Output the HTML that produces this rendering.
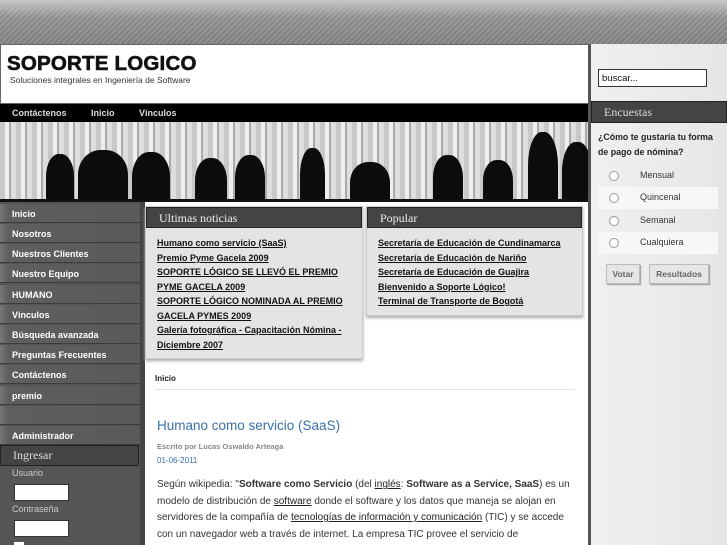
<!DOCTYPE html>
<html><head><meta charset="utf-8"><style>
*{margin:0;padding:0;box-sizing:border-box}
html,body{width:727px;height:545px;overflow:hidden}
body{position:relative;font-family:"Liberation Sans",sans-serif;background:#555}
.top{position:absolute;left:0;top:0;width:727px;height:44px;background:repeating-linear-gradient(135deg,#8a8a8a 0 2px,#9e9e9e 2px 4px);}
.top:after{content:"";position:absolute;inset:0;background:linear-gradient(#c8c8c8 0,rgba(200,200,200,0) 40%,rgba(0,0,0,0.1))}
.hdr{position:absolute;left:0;top:44px;width:589px;height:60px;background:#fff;border:1px solid #666;border-right:none}
.hdr h1{position:absolute;left:6px;top:7px;font-size:20.5px;font-weight:bold;color:#111;letter-spacing:0.2px;-webkit-text-stroke:0.6px #111}
.hdr p{position:absolute;left:9px;top:30px;font-size:8.5px;color:#333}
.nav{position:absolute;left:0;top:104px;width:589px;height:18px;background:#000;color:#ddd;font-size:9px;font-weight:bold}
.nav span{position:absolute;top:4px}
.ban{position:absolute;left:0;top:122px;width:589px;height:80px;background:repeating-linear-gradient(90deg,#c8c8c8 0 5px,#eee 5px 9px,#aaa 9px 11px,#ddd 11px 16px);overflow:hidden;border-bottom:3px solid #111}
.ban i{position:absolute;background:#0c0c0c;border-radius:45% 45% 10% 10%}
.left{position:absolute;left:0;top:202px;width:140px;height:343px;background:#555}
.mi{position:absolute;left:0;width:140px;height:19px;background:linear-gradient(90deg,#777,#5e5e5e 8px,#5a5a5a);color:#fff;font-size:9px;font-weight:bold;padding:5px 0 0 12px;border-bottom:1px solid #3c3c3c}
.lbl{position:absolute;left:12px;font-size:9px;color:#ccc}
.inp{position:absolute;left:14px;width:55px;height:17px;background:#fff;border:1px solid #333}
.main{position:absolute;left:140px;top:202px;width:449px;height:343px;background:#fff;border-left:5px solid #444}
.box{position:absolute;background:#e4e4e4;border:1px solid #ccc;box-shadow:0 2px 3px #aaa}
.bh{height:21px;background:#444;color:#eee;font-family:"Liberation Serif",serif;font-size:12px;padding:3px 0 0 12px;border:1px solid #222}
.box a{display:block;color:#111;font-size:9px;font-weight:bold;text-decoration:underline;line-height:14.5px;margin-left:11px;white-space:nowrap}
.right{position:absolute;left:588px;top:44px;width:139px;height:501px;background:linear-gradient(90deg,#f0f0f0,#e6e6e6);border-left:3px solid #555}
.opt{position:absolute;left:7px;width:120px;height:22px;font-size:9px;color:#333}
.opt b{position:absolute;left:11px;top:6px;width:10px;height:10px;border:1px solid #999;border-radius:50%;background:#fff}
.opt span{position:absolute;left:42px;top:5px}
.btn{position:absolute;top:220px;height:20px;background:#e6e6e6;border:1px solid #bbb;box-shadow:1px 1px 1px #999;font-size:8.5px;font-weight:bold;color:#666;text-align:center;padding-top:4px}
.txt{position:absolute;left:157px;top:477px;width:425px;font-size:10px;color:#333;line-height:16.5px}
.txt u{color:#222}
</style></head><body>
<div class="top"></div>
<div class="hdr"><h1>SOPORTE LOGICO</h1><p>Soluciones integrales en Ingeniería de Software</p></div>
<div class="nav"><span style="left:12px">Contáctenos</span><span style="left:91px">Inicio</span><span style="left:139px">Vínculos</span></div>
<div class="ban">
<i style="left:46px;top:32px;width:28px;height:50px"></i>
<i style="left:78px;top:28px;width:50px;height:55px"></i>
<i style="left:132px;top:30px;width:38px;height:55px"></i>
<i style="left:195px;top:36px;width:32px;height:50px"></i>
<i style="left:235px;top:33px;width:30px;height:50px"></i>
<i style="left:300px;top:26px;width:25px;height:60px"></i>
<i style="left:350px;top:40px;width:40px;height:45px"></i>
<i style="left:433px;top:33px;width:30px;height:50px"></i>
<i style="left:483px;top:38px;width:30px;height:45px"></i>
<i style="left:528px;top:10px;width:30px;height:75px"></i>
<i style="left:562px;top:20px;width:30px;height:65px"></i>
</div>
<div class="left">
<div class="mi" style="top:2px">Inicio</div>
<div class="mi" style="top:22px">Nosotros</div>
<div class="mi" style="top:42px">Nuestros Clientes</div>
<div class="mi" style="top:62px">Nuestro Equipo</div>
<div class="mi" style="top:83px">HUMANO</div>
<div class="mi" style="top:103px">Vínculos</div>
<div class="mi" style="top:123px">Búsqueda avanzada</div>
<div class="mi" style="top:143px">Preguntas Frecuentes</div>
<div class="mi" style="top:163px">Contáctenos</div>
<div class="mi" style="top:184px">premio</div>
<div class="mi" style="top:204px"></div>
<div class="mi" style="top:224px">Administrador</div>
<div style="position:absolute;left:0;top:243px;width:139px;height:21px;background:#444;border:1px solid #222;color:#ddd;font-family:'Liberation Serif',serif;font-size:12px;padding:2px 0 0 12px">Ingresar</div>
<div class="lbl" style="top:266px">Usuario</div>
<div class="inp" style="top:282px"></div>
<div class="lbl" style="top:302px">Contraseña</div>
<div class="inp" style="top:318px"></div>
<div style="position:absolute;left:14px;top:340px;width:10px;height:10px;background:#fff"></div>
</div>
<div class="main"></div>
<div class="box" style="left:145px;top:206px;width:218px;height:153px"><div class="bh">Ultimas noticias</div><div style="padding-top:8px">
<a>Humano como servicio (SaaS)</a><a>Premio Pyme Gacela 2009</a><a>SOPORTE LÓGICO SE LLEVÓ EL PREMIO</a><a>PYME GACELA 2009</a><a>SOPORTE LÓGICO NOMINADA AL PREMIO</a><a>GACELA PYMES 2009</a><a>Galería fotográfica - Capacitación Nómina -</a><a>Diciembre 2007</a></div></div>
<div class="box" style="left:366px;top:206px;width:217px;height:110px"><div class="bh">Popular</div><div style="padding-top:8px">
<a>Secretaría de Educación de Cundinamarca</a><a>Secretaría de Educación de Nariño</a><a>Secretaría de Educación de Guajira</a><a>Bienvenido a Soporte Lógico!</a><a>Terminal de Transporte de Bogotá</a></div></div>
<div style="position:absolute;left:155px;top:374px;font-size:8px;font-weight:bold;color:#222">Inicio</div>
<div style="position:absolute;left:155px;top:389px;width:420px;border-top:1px solid #e4e4e4"></div>
<div style="position:absolute;left:157px;top:418px;font-size:13.5px;color:#3a6fa8">Humano como servicio (SaaS)</div>
<div style="position:absolute;left:157px;top:442px;font-size:7.5px;font-weight:bold;color:#888">Escrito por Lucas Oswaldo Arteaga</div>
<div style="position:absolute;left:157px;top:456px;font-size:8px;color:#3a6fa8">01-06-2011</div>
<div class="txt">Según wikipedia: "<b>Software como Servicio</b> (del <u>inglés</u>: <b>Software as a Service, SaaS</b>) es un modelo de distribución de <u>software</u> donde el software y los datos que maneja se alojan en servidores de la compañía de <u>tecnologías de información y comunicación</u> (TIC) y se accede con un navegador web a través de internet. La empresa TIC provee el servicio de mantenimiento, operación diaria, y soporte del software usado por el cliente. Regularmente el</div>
<div class="right">
<div style="position:absolute;left:7px;top:25px;width:109px;height:18px;background:#fff;border:1px solid #333;font-size:9.5px;padding:3px 0 0 3px;color:#111">buscar...</div>
<div style="position:absolute;left:0;top:57px;width:136px;height:22px;background:#444;border:1px solid #222;color:#ddd;font-family:'Liberation Serif',serif;font-size:12px;padding:3px 0 0 12px">Encuestas</div>
<div style="position:absolute;left:7px;top:86px;font-size:8.8px;font-weight:bold;color:#222;line-height:14.5px">¿Cómo te gustaría tu forma<br>de pago de nómina?</div>
<div class="opt" style="top:121px"><b></b><span>Mensual</span></div>
<div class="opt" style="top:143px;background:#f7f7f7"><b></b><span>Quincenal</span></div>
<div class="opt" style="top:166px"><b></b><span>Semanal</span></div>
<div class="opt" style="top:188px;background:#f7f7f7"><b></b><span>Cualquiera</span></div>
<div class="btn" style="left:15px;width:34px">Votar</div>
<div class="btn" style="left:58px;width:60px">Resultados</div>
</div>
</body></html>
